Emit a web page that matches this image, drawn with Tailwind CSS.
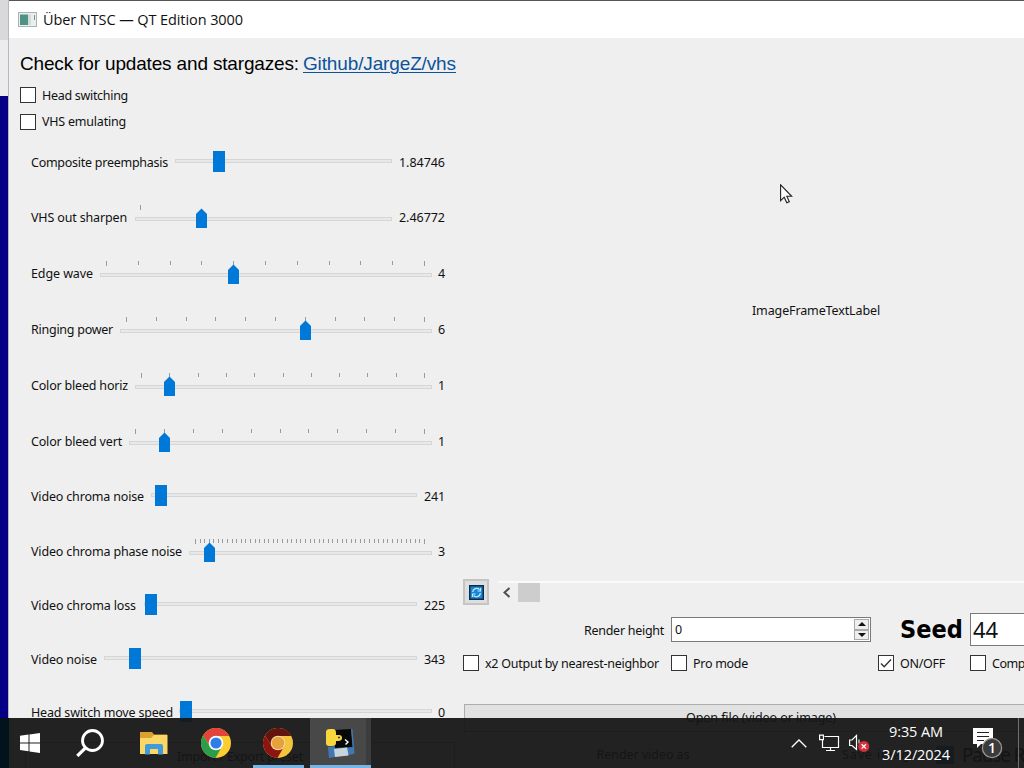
<!DOCTYPE html>
<html lang="en">
  <head>
    <meta charset="UTF-8" />
    <title>Über NTSC — QT Edition 3000</title>
    <meta name="viewport" content="width=device-width, initial-scale=1" />
    <script src="https://cdn.jsdelivr.net/npm/@tailwindcss/browser@4"></script>
  </head>
  <body class="overflow-hidden">
    <div
      class="relative flex w-[1024px] h-[768px] overflow-hidden bg-[#efefef] font-['Noto_Sans',sans-serif] text-[12.5px] leading-4 text-[#111] whitespace-nowrap"
    >
      <!-- desktop behind the window -->
      <div class="w-[9px] shrink-0 flex flex-col border-r border-[#b8b8c0]">
        <div class="h-10 bg-[#d9d9db]"></div>
        <div class="h-14 bg-[#ececee]"></div>
        <div class="flex-1 bg-[#080084]"></div>
      </div>

      <!-- window -->
      <div class="w-[1015px] shrink-0 flex flex-col">
        <header
          class="h-[38px] shrink-0 bg-white border-t border-[#555] flex items-center pl-[9px] gap-[6px] font-['Open_Sans',sans-serif] text-[14.5px]"
        >
          <svg width="19" height="15" viewBox="0 0 19 15">
            <rect x=".5" y=".5" width="18" height="14" fill="#e9eeee" stroke="#a9b5b5" />
            <rect x="2" y="2.5" width="8" height="10.5" fill="#4f9183" />
            <rect x="10" y="2.5" width="3" height="10.5" fill="#cfdcda" />
            <path d="M16.5 3v5" stroke="#7d8c8c" />
          </svg>
          <span class="pt-px" data-w="200">Über NTSC — QT Edition 3000</span>
        </header>

        <div class="flex flex-1">
          <!-- left column -->
          <section class="w-[454px] shrink-0 flex flex-col">
            <div
              class="h-[44px] pt-[15px] pl-[11px] flex gap-1 font-['Liberation_Sans',sans-serif] text-[19px] leading-[22px] text-black"
            >
              <span data-w="279">Check for updates and stargazes:</span>
              <a href="#" class="text-[#0b539c] underline underline-offset-2 decoration-1" data-w="153">Github/JargeZ/vhs</a>
            </div>
            <label class="h-[26px] flex items-center gap-[6px] pl-[11px]">
              <span class="size-4 bg-white border border-[#333]"></span>
              <span class="pt-px" data-w="86">Head switching</span>
            </label>
            <label class="h-[27px] flex items-center gap-[6px] pl-[11px]">
              <span class="size-4 bg-white border border-[#333]"></span>
              <span class="pt-px" data-w="84">VHS emulating</span>
            </label>
            <div id="sliders" class="pl-[22px] w-[436px]"></div>
            <div class="ml-[16px] mt-[5px] w-[430px] h-[60px] border border-[#999] pt-[6px] text-center text-black">
              <span data-w="126">Import / Export preset</span>
            </div>
          </section>

          <!-- preview and render settings -->
          <section class="flex-1 flex flex-col">
            <div class="h-[541px] pl-[289px] pt-[265px]">
              <span data-w="128">ImageFrameTextLabel</span>
            </div>

            <div class="h-[26px] flex">
              <div class="size-[26px] bg-[#dedede] border-2 border-[#c4c4c4] flex items-center justify-center">
                <svg width="15" height="15" viewBox="0 0 15 15">
                  <rect x=".75" y=".75" width="13.5" height="13.5" fill="#1c84d2" stroke="#0b2c4a" stroke-width="1.5" />
                  <path d="M3.7 7A4 4 0 0 1 10.5 4.6M11.4 8A4 4 0 0 1 4.6 10.6" fill="none" stroke="#bdf0ff" stroke-width="1.3" />
                  <path d="M11.5 3v3H8.6M3.5 12V9h3" fill="none" stroke="#bdf0ff" stroke-width="1.2" />
                </svg>
              </div>
              <div class="ml-[9px] mt-[2px] h-[20px] flex-1 border-t-2 border-[#fafafa] flex items-center">
                <svg width="20" height="19" viewBox="0 0 20 19">
                  <path d="M11.5 5L6.5 9.5L11.5 14" fill="none" stroke="#505050" stroke-width="2" />
                </svg>
                <div class="w-[22px] h-[19px] bg-[#cdcdcd]"></div>
                <svg class="ml-auto" width="16" height="19" viewBox="0 0 16 19">
                  <path d="M5 5L10 9.5L5 14" fill="none" stroke="#505050" stroke-width="2" />
                </svg>
              </div>
            </div>

            <div class="h-[49px] flex items-center">
              <span class="ml-[121px] w-[87px] pt-[2px]" data-w="80">Render height</span>
              <div class="w-[200px] h-[25px] bg-white border border-[#7a7a7a] flex items-center pl-[3px]">
                <span>0</span>
                <div class="ml-auto mr-px w-[15px] h-[21px] flex flex-col">
                  <div class="flex-1 bg-[#eee] border border-[#aaa] flex items-center justify-center">
                    <svg width="8" height="4" viewBox="0 0 8 4"><path d="M0 4L4 0L8 4Z" fill="#111" /></svg>
                  </div>
                  <div class="flex-1 bg-[#eee] border border-[#aaa] flex items-center justify-center">
                    <svg width="8" height="4" viewBox="0 0 8 4"><path d="M0 0L4 4L8 0Z" fill="#111" /></svg>
                  </div>
                </div>
              </div>
              <span
                class="ml-[29px] w-[70px] font-['DejaVu_Sans_Condensed','DejaVu_Sans',sans-serif] font-stretch-condensed font-bold text-[25px] leading-8 text-black"
                data-w="63"
                >Seed</span
              >
              <div class="flex-1 h-[33px] bg-white border border-r-0 border-[#7a7a7a] pl-[2px] text-[22px] leading-[31px]">
                <span data-w="25">44</span>
              </div>
            </div>

            <div class="h-[18px] flex items-center">
              <label class="w-[208px] flex items-center gap-[6px]">
                <span class="size-4 bg-white border border-[#333]"></span>
                <span class="pt-px" data-w="174">x2 Output by nearest-neighbor</span>
              </label>
              <label class="w-[207px] flex items-center gap-[6px]">
                <span class="size-4 bg-white border border-[#333]"></span>
                <span class="pt-px" data-w="55">Pro mode</span>
              </label>
              <label class="w-[92px] flex items-center gap-[6px]">
                <span class="size-4 bg-white border border-[#333]">
                  <svg width="14" height="14" viewBox="0 0 14 14">
                    <path d="M2 7.5L5.2 10.7L12 3.5" fill="none" stroke="#333" stroke-width="1.4" />
                  </svg>
                </span>
                <span class="pt-px" data-w="45">ON/OFF</span>
              </label>
              <label class="flex items-center gap-[6px]">
                <span class="size-4 bg-white border border-[#333]"></span>
                <span class="pt-px" data-w="33">Comp</span>
              </label>
            </div>

            <div class="mt-[32px] ml-px w-[594px] h-[28px] bg-[#e1e1e1] border border-[#adadad] pt-[5px] text-center">
              <span data-w="150">Open file (video or image)</span>
            </div>
            <div class="mt-[8px] ml-px flex items-center h-[30px] text-black">
              <div class="w-[358px] text-center"><span data-w="93">Render video as</span></div>
              <div class="ml-[20px] w-[94px]"><span data-w="76">Save image</span></div>
              <div class="size-[18px] bg-[#0078d7]"></div>
              <div class="ml-[8px] text-[19px] leading-5"><span data-w="62">Pause R</span></div>
            </div>
          </section>
        </div>
      </div>

      <!-- mouse pointer -->
      <svg class="absolute left-[780px] top-[184px]" width="13" height="20" viewBox="0 0 13 20">
        <path d="M.6 .8V16.6L4.2 13.2L6.8 18.7L9.3 17.6L6.8 12.3H11.7Z" fill="#fff" stroke="#222" stroke-width="1.1" />
      </svg>

      <!-- taskbar -->
      <footer class="absolute left-0 top-[718px] w-[1024px] h-[50px] bg-[#151515]/94 flex text-white">
        <div class="absolute left-0 top-0 w-[9px] h-[50px] bg-[#02131b]"></div>
        <div class="relative w-[60px] flex items-center justify-center">
          <svg width="20" height="20" viewBox="0 0 20 20" fill="#fff">
            <path d="M0 2.8L8.5 1.6V9.4H0ZM9.5 1.5L20 0V9.4H9.5ZM0 10.4H8.5V18.3L0 17.1ZM9.5 10.4H20V20L9.5 18.5Z" />
          </svg>
        </div>
        <div class="w-[60px] flex items-center justify-center">
          <svg width="28" height="28" viewBox="0 0 28 28" fill="none" stroke="#fff">
            <circle cx="16.5" cy="11.5" r="10" stroke-width="2.8" />
            <path d="M9.5 18.8L1.3 27" stroke-width="3.2" />
          </svg>
        </div>
        <div class="ml-[3px] w-[62px] flex items-center justify-center">
          <svg width="28" height="24" viewBox="0 0 28 24">
            <path d="M0 1H12L14 3.5H27V8H0Z" fill="#dca02f" />
            <path d="M0 7H11L14 4H27.5V23H0Z" fill="#fbd866" />
            <path d="M5 23.5V15Q5 13 7 13H21Q23 13 23 15V23.5H18V18H10V23.5Z" fill="#3f9bdc" />
          </svg>
        </div>
        <div class="w-[62px] flex items-center justify-center">
          <svg width="30" height="30" viewBox="0 0 30 30">
            <circle cx="15" cy="15" r="15" fill="#fccd2e" />
            <path d="M15 8H28.3A15 15 0 0 0 2 7.5L9 18.5Z" fill="#e2443a" />
            <path d="M2 7.5A15 15 0 0 0 14.5 30L21 18.5L15 22L9 18.5Z" fill="#2a9e4b" />
            <circle cx="15" cy="15" r="7.3" fill="#fff" />
            <circle cx="15" cy="15" r="5.6" fill="#2f7de8" />
          </svg>
        </div>
        <div class="relative w-[62px] flex items-center justify-center">
          <svg width="30" height="30" viewBox="0 0 30 30">
            <circle cx="15" cy="15" r="15" fill="#f3c33c" />
            <path d="M15 8H28.3A15 15 0 0 0 2 7.5L9 18.5Z" fill="#631410" />
            <path d="M2 7.5A15 15 0 0 0 14.5 30L21 18.5L15 22L9 18.5Z" fill="#8d1411" />
            <circle cx="15" cy="15" r="7.3" fill="#f5d9a0" />
            <circle cx="15" cy="15" r="6.2" fill="#e6a03c" />
          </svg>
          <div class="absolute left-[6px] bottom-0 w-[51px] h-[3px] bg-[#76b5e8]"></div>
        </div>
        <div class="relative ml-px w-[61px] bg-[#484848] border-r-[5px] border-[#3c3c3c] flex items-center justify-center">
          <svg class="ml-[4px]" width="30" height="32" viewBox="0 0 30 32">
            <path d="M3 20L27 17L29 27L4 31Z" fill="#3f78b4" />
            <path d="M9 3L26 2L28 20L10 21Z" fill="#080808" />
            <path d="M26 2L27.5 2L29.5 26L28 26Z" fill="#3f78b4" />
            <path d="M9 22L22 20.5L23.5 28.5L10 30Z" fill="#c9d3da" />
            <path d="M1 5Q1 2 5 2H8Q11 2 11 6V8H14Q17 8 17 11Q17 14 13 14H11V16Q11 19 7 19H4Q1 19 1 16Z" fill="#f8d73c" />
            <path d="M13 10.5h2" stroke="#333" stroke-width="1.5" />
            <path d="M20 12.5L23 15L20.5 17.5" fill="none" stroke="#fff" stroke-width="1.4" />
          </svg>
          <div class="absolute left-0 bottom-0 w-[61px] h-[3px] bg-[#76b5e8]"></div>
        </div>

        <!-- tray -->
        <div class="ml-auto w-[233px] flex items-center">
          <svg width="16" height="9" viewBox="0 0 16 9">
            <path d="M.7 8.3L8 1L15.3 8.3" fill="none" stroke="#fff" stroke-width="1.3" />
          </svg>
          <svg class="ml-[12px]" width="21" height="18" viewBox="0 0 21 18" fill="none" stroke="#fff" stroke-width="1.2">
            <path d="M5.5 2.5H19.5V13.5H3.5V6M11.5 13.5V16.5M7 16.5H16" />
            <path d="M.6 1.2H4.4V5.6H.6Z" />
          </svg>
          <svg class="ml-[9px]" width="21" height="18" viewBox="0 0 21 18">
            <path d="M.6 6H3L7.5 1.5V15.5L3 11.5H.6Z" fill="none" stroke="#fff" stroke-width="1.2" />
            <path d="M10 5.5v4" stroke="#fff" stroke-width="1" />
            <circle cx="14.8" cy="12.4" r="5.5" fill="#d8303b" />
            <path d="M12.6 10.2L17 14.6M17 10.2L12.6 14.6" stroke="#fff" stroke-width="1.3" />
          </svg>
          <div class="ml-[10px] w-[72px] flex flex-col items-center gap-[3px] font-['Open_Sans',sans-serif] text-[14.5px] leading-5">
            <span data-w="54">9:35 AM</span>
            <span data-w="68">3/12/2024</span>
          </div>
          <svg class="ml-[20px]" width="32" height="32" viewBox="0 0 32 32">
            <path d="M1 1H21V17H9L5 21V17H1Z" fill="#fff" />
            <path d="M5 5.5H17M5 9.5H17M5 13.5H12" stroke="#222" stroke-width="1.2" />
            <circle cx="20" cy="21" r="9.6" fill="#3b3b3b" stroke="#9a9a9a" stroke-width="1.2" />
            <text x="20" y="26" text-anchor="middle" font-family="Open Sans, sans-serif" font-size="14" font-weight="600" fill="#fff">1</text>
          </svg>
          <div class="ml-auto mr-[5px] w-px h-[50px] bg-[#707070]"></div>
        </div>
      </footer>
    </div>

    <script>
      // Row height, label text and width, groove start and length,
      // handle centre on the groove, tick range [first, last, intervals]
      const sliders = [
        { h: 54, name: "Composite preemphasis", tw: 137, x: 175, len: 217, pos: 44, value: "1.84746", vw: 46 },
        { h: 56, name: "VHS out sharpen", tw: 96, x: 135, len: 257, pos: 66.5, ticks: [5, 5, 1], value: "2.46772", vw: 46 },
        { h: 56, name: "Edge wave", tw: 62, x: 100, len: 332, pos: 133.5, ticks: [6, 324, 10], value: "4", vw: 7 },
        { h: 56, name: "Ringing power", tw: 82, x: 120, len: 312, pos: 185.5, ticks: [6, 304, 10], value: "6", vw: 7 },
        { h: 56, name: "Color bleed horiz", tw: 97, x: 135, len: 297, pos: 34.5, ticks: [6, 289, 10], value: "1", vw: 7 },
        { h: 56, name: "Color bleed vert", tw: 91, x: 129, len: 303, pos: 35.5, ticks: [6, 295, 10], value: "1", vw: 7 },
        { h: 54, name: "Video chroma noise", tw: 113, x: 151, len: 266, pos: 10, value: "241", vw: 21 },
        { h: 56, name: "Video chroma phase noise", tw: 151, x: 189, len: 243, pos: 20.5, ticks: [6, 235, 50], value: "3", vw: 7 },
        { h: 52, name: "Video chroma loss", tw: 105, x: 144, len: 273, pos: 7, value: "225", vw: 21 },
        { h: 56, name: "Video noise", tw: 66, x: 104, len: 313, pos: 31, value: "343", vw: 21 },
        { h: 50, name: "Head switch move speed", tw: 142, x: 179, len: 253, pos: 7, value: "0", vw: 7 },
      ];

      let rows = "";
      for (const s of sliders) {
        const y = s.ticks ? 21 : 18;
        let parts = `<rect x="0.5" y="${y - 0.5}" width="${s.len - 1}" height="3" fill="#e8e8e8" stroke="#d6d6d6" />`;
        if (s.ticks) {
          const [first, last, n] = s.ticks;
          for (let i = 0; i <= n; i++) {
            const tx = Math.round(first + ((last - first) * i) / n) + 0.5;
            const end = i === 0 || i === n ? 13 : 12;
            parts += `<path d="M${tx} 8V${end}" stroke="#9a9a9a" />`;
          }
          parts += `<path d="M${s.pos - 5.5} 31V17L${s.pos} 11.5L${s.pos + 5.5} 17V31Z" fill="#0078d7" />`;
        } else {
          parts += `<rect x="${s.pos - 6}" y="9" width="12" height="21" fill="#0078d7" />`;
        }
        rows += `
          <div class="flex items-center" style="height:${s.h}px">
            <div class="shrink-0 pt-[2px]" style="width:${s.x - 31}px"><span data-w="${s.tw}">${s.name}</span></div>
            <svg class="shrink-0" width="${s.len}" height="40">${parts}</svg>
            <div class="flex-1 flex justify-end pt-[2px]"><span data-w="${s.vw}">${s.value}</span></div>
          </div>`;
      }
      document.getElementById("sliders").innerHTML = rows;

      // Track each text out to its nominal width
      function fitTexts() {
        document.querySelectorAll("[data-w]").forEach((el) => {
          const range = document.createRange();
          range.selectNodeContents(el);
          el.style.letterSpacing = "0.001px";
          const gap = el.dataset.w - range.getBoundingClientRect().width;
          el.style.letterSpacing = gap / el.textContent.length + "px";
        });
      }
      window.addEventListener("load", () => {
        fitTexts();
        document.fonts.ready.then(fitTexts);
        setTimeout(fitTexts, 60);
      });
    </script>
  </body>
</html>
